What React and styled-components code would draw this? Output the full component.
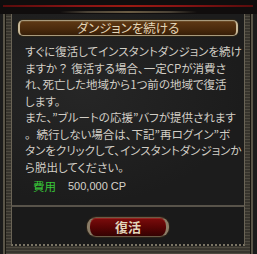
import styled, { createGlobalStyle } from "styled-components";

const Global = createGlobalStyle`
  html, body {
    margin: 0;
    padding: 0;
    background: #141414;
  }
`;

export default function App() {
    return (
        <>
            <Global />
            <Window>
                <TopBar>
                    <RedLine />
                    <Ridge />
                </TopBar>

                <Frame>
                    <Panel>
                        <Title>
                            <span>ダンジョンを続ける</span>
                        </Title>

                        <Message>
                            すぐに復活してインスタントダンジョンを続け<br />
                            ますか<Wide>？</Wide> 復活する場合、一定CPが消費さ<br />
                            れ、死亡した地域から1つ前の地域で復活<br />
                            します。<br />
                            また、”ブルートの応援”バフが提供されます<br />
                            <Wide>。</Wide>続行しない場合は、下記”再ログイン”ボ<br />
                            タンをクリックして、インスタントダンジョンか<br />
                            ら脱出してください。
                        </Message>

                        <Cost>
                            <CostLabel>費用</CostLabel>
                            <CostValue>500,000 CP</CostValue>
                        </Cost>
                    </Panel>

                    <Footer>
                        <ReviveButton>復活</ReviveButton>
                    </Footer>
                </Frame>
            </Window>
        </>
    );
}

const Window = styled.div`
    width: 257px;
    height: 254px;
    display: flex;
    flex-direction: column;
    background: #1b1b1b;
    overflow: hidden;
`;

const TopBar = styled.div`
    height: 14px;
    flex-shrink: 0;
    background: #100d0d;
    display: flex;
    flex-direction: column;
    padding-top: 5px;
    box-sizing: border-box;
`;

const RedLine = styled.div`
    height: 2px;
    margin: 0 4px 0 3px;
    background: linear-gradient(90deg, #5a0c0c, #8a1414 30%, #9a1a12 50%, #8a1414 70%, #5a0c0c);
`;

const Ridge = styled.div`
    height: 2px;
    margin: 4px 60px 0;
    background: linear-gradient(90deg, transparent, #4a4236 20%, #6a5c44 50%, #4a4236 80%, transparent);
`;

const Frame = styled.div`
    flex: 1;
    display: flex;
    flex-direction: column;
    margin: 0 4px 0 3px;
    padding: 0 8px 8px;
    background:
        repeating-linear-gradient(0deg, #4e4a40 0 1px, #37342d 1px 3px);
    box-shadow: inset 2px 0 0 #5a5548, inset 3px 0 0 #17150f, inset -2px 0 0 #5a5548, inset -3px 0 0 #17150f;
`;

const Panel = styled.div`
    flex: 1;
    display: flex;
    flex-direction: column;
    padding: 6px 6px 0;
    background:
        radial-gradient(ellipse at 30% 40%, #262626, #1c1c1c 70%);
    border-left: 1px solid #6a6456;
    border-right: 1px solid #6a6456;
    border-bottom: 2px solid #58534a;
`;

const Title = styled.div`
    height: 14px;
    display: flex;
    align-items: center;
    justify-content: center;
    margin: 0 0 7px;
    border: 1px solid #a89a7c;
    border-left: 2px solid #c8b898;
    border-right: 2px solid #c8b898;
    border-radius: 5px;
    background: linear-gradient(180deg, #5e3814, #4a2a0c 60%, #361e08);
    box-shadow: 0 0 0 1px #2a2418, inset 0 1px 0 #6a4a26;

    span {
        font-family: "Noto Sans CJK JP", sans-serif;
        font-size: 12.5px;
        color: #e4d6b8;
        line-height: 1;
        font-feature-settings: "palt";
    }
`;

const Message = styled.p`
    margin: 0;
    padding-left: 7px;
    font-family: "Noto Sans CJK JP", sans-serif;
    font-size: 11.5px;
    line-height: 16.5px;
    color: #d2cec6;
    white-space: nowrap;
    font-feature-settings: "palt";
`;

const Wide = styled.span`
    font-feature-settings: normal;
`;

const Cost = styled.div`
    display: flex;
    align-items: center;
    gap: 12px;
    margin-top: 2px;
    padding-left: 15px;
    height: 18px;
    font-family: "Noto Sans CJK JP", sans-serif;
    font-size: 11.5px;
`;

const CostLabel = styled.span`
    color: #38c838;
`;

const CostValue = styled.span`
    color: #d6d2ca;
    font-family: "Liberation Sans", sans-serif;
    font-size: 11px;
`;

const Footer = styled.div`
    height: 39px;
    flex-shrink: 0;
    display: flex;
    align-items: center;
    justify-content: center;
    padding-top: 2px;
    box-sizing: border-box;
    background: #1a1a1a;
    border-left: 1px solid #6a6456;
    border-right: 1px solid #6a6456;
    border-bottom: 2px dotted #7a7464;
`;

const ReviveButton = styled.button`
    width: 82px;
    height: 20px;
    padding: 0;
    border: 1px solid #6a5a46;
    border-left: 3px solid #8a7c66;
    border-right: 3px solid #8a7c66;
    border-radius: 9px;
    background: linear-gradient(180deg, #7c0c0c, #5a0404 50%, #340202);
    box-shadow: 0 0 0 1px #2a2218, inset 0 1px 0 #962420;
    font-family: "Noto Sans CJK JP", sans-serif;
    font-size: 13px;
    font-weight: 700;
    color: #e2d6ba;
    line-height: 1;
    cursor: pointer;
`;
